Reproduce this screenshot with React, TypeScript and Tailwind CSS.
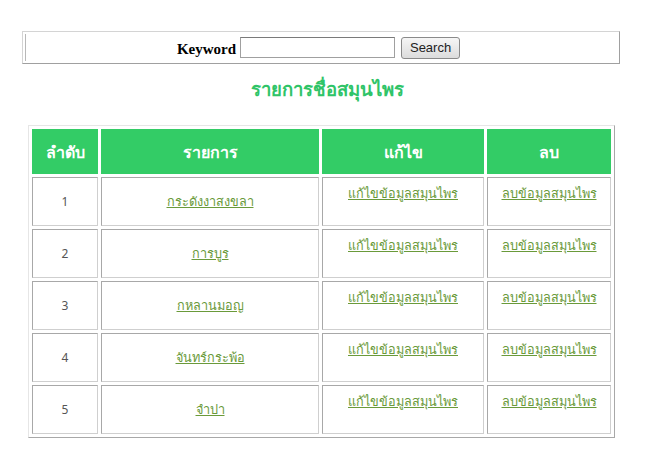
import React from "react";

const rows = [
  { no: 1, name: "กระดังงาสงขลา" },
  { no: 2, name: "การบูร" },
  { no: 3, name: "กหลานมอญ" },
  { no: 4, name: "จันทร์กระพ้อ" },
  { no: 5, name: "จำปา" },
];

export default function App() {
  return (
    <div className="w-[650px] h-[467px] bg-white font-['Noto_Sans',sans-serif] overflow-hidden">
      <div className="pt-[31px] pl-[22px]">
        <div className="w-[598px] h-[33px] border border-t-[#d4d4d4] border-l-[#d4d4d4] border-r-[#a0a0a0] border-b-[#a0a0a0] p-[2px]">
          <div className="h-full border-l border-[#b8b8b8] flex items-center justify-center gap-[4px] pr-[6px]">
            <span className="font-['Liberation_Serif',serif] font-bold text-[15px] text-black mt-[3px]">Keyword</span>
            <input className="w-[155px] h-[21px] border border-[#a0a0a0] border-t-[#7a7a7a] bg-white outline-none" />
            <button className="ml-[2px] h-[22px] w-[59px] text-[13px] font-['Liberation_Sans',sans-serif] text-[#222] border border-[#8a8a8a] rounded-[3px] bg-gradient-to-b from-[#f6f6f6] to-[#dcdcdc] leading-none">
              Search
            </button>
          </div>
        </div>
      </div>

      <div className="mt-[12px] text-center text-[#2fc468] font-bold text-[18.5px] leading-[26px] pl-[4px]">
        รายการชื่อสมุนไพร
      </div>

      <div className="mt-[23px] pl-[28px]">
        <table className="w-[587px] border-separate border-spacing-[3px] border border-t-[#e6e6e6] border-l-[#e6e6e6] border-r-[#a8a8a8] border-b-[#a8a8a8] table-fixed">
          <colgroup>
            <col className="w-[66px]" />
            <col className="w-[218px]" />
            <col className="w-[162px]" />
            <col className="w-[124px]" />
          </colgroup>
          <thead>
            <tr className="h-[45px]">
              {["ลำดับ", "รายการ", "แก้ไข", "ลบ"].map((h) => (
                <th
                  key={h}
                  className="bg-[#33cc66] text-white text-[16px] font-semibold border border-[#33cc66] align-middle"
                >
                  {h}
                </th>
              ))}
            </tr>
          </thead>
          <tbody>
            {rows.map((r) => (
              <tr key={r.no} className="h-[49px]">
                <td className="border border-[#a8a8a8] border-r-[#cfcfcf] border-b-[#cfcfcf] text-center align-middle text-[12px] text-[#555]">
                  {r.no}
                </td>
                <td className="border border-[#a8a8a8] border-r-[#cfcfcf] border-b-[#cfcfcf] text-center align-middle text-[12.7px]">
                  <a href="#" className="text-[#6a9a3a] underline">
                    {r.name}
                  </a>
                </td>
                <td className="border border-[#a8a8a8] border-r-[#cfcfcf] border-b-[#cfcfcf] text-center align-top pt-[6px] text-[12.7px]">
                  <a href="#" className="text-[#6a9a3a] underline">
                    แก้ไขข้อมูลสมุนไพร
                  </a>
                </td>
                <td className="border border-[#a8a8a8] border-r-[#cfcfcf] border-b-[#cfcfcf] text-center align-top pt-[6px] text-[12.7px]">
                  <a href="#" className="text-[#6a9a3a] underline">
                    ลบข้อมูลสมุนไพร
                  </a>
                </td>
              </tr>
            ))}
          </tbody>
        </table>
      </div>
    </div>
  );
}
